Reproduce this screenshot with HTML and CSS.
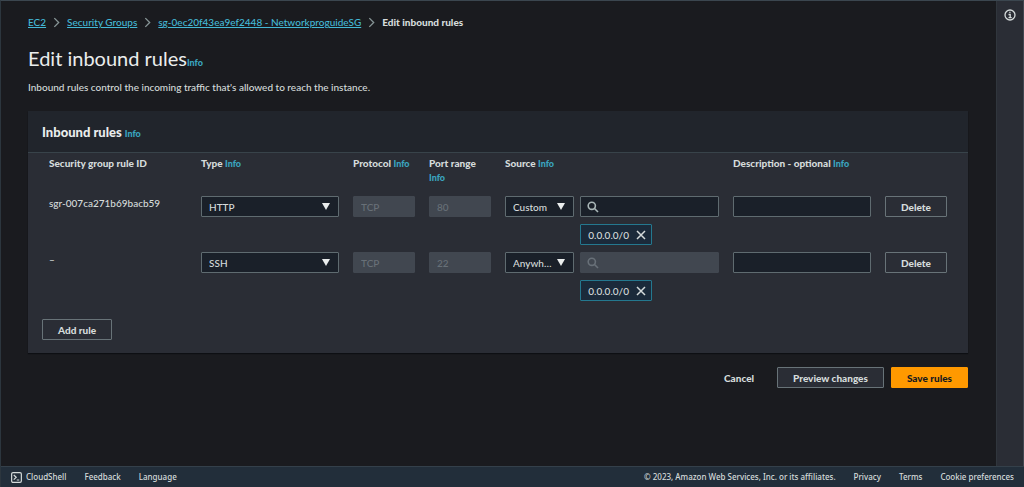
FILE: index.html
```
<!DOCTYPE html>
<html lang="en">
<head>
<meta charset="UTF-8">
<meta name="viewport" content="width=device-width, initial-scale=1">
<title>Edit inbound rules</title>
<link rel="stylesheet" href="styles.css">
</head>
<body>

<div class="layout">
	<main class="content">
		<nav aria-label="Breadcrumbs">
			<ol class="breadcrumbs">
				<li><a href="#">EC2</a><svg class="chevron" viewBox="0 0 8 12"><path d="M1.5 1 6.500 6l-5 5"/></svg></li>
				<li><a href="#">Security Groups</a><svg class="chevron" viewBox="0 0 8 12"><path d="M1.5 1 6.500 6l-5 5"/></svg></li>
				<li><a href="#">sg-0ec20f43ea9ef2448 - NetworkproguideSG</a><svg class="chevron" viewBox="0 0 8 12"><path d="M1.5 1 6.500 6l-5 5"/></svg></li>
				<li class="current" aria-current="page">Edit inbound rules</li>
			</ol>
		</nav>

		<h1 class="title">Edit inbound rules<a class="info" href="#">Info</a></h1>
		<p class="description">Inbound rules control the incoming traffic that's allowed to reach the instance.</p>

		<form>
			<section class="panel">
				<header class="panel-header">
					<h2>Inbound rules <a class="info" href="#">Info</a></h2>
				</header>
				<div class="panel-body">
					<table class="rules">
						<colgroup>
							<col class="col-2">
							<col class="col-2">
							<col class="col-1">
							<col class="col-1">
							<col class="col-3">
							<col class="col-2">
							<col class="col-1">
						</colgroup>
						<thead>
							<tr>
								<th scope="col">Security group rule ID</th>
								<th scope="col">Type <a class="info" href="#">Info</a></th>
								<th scope="col">Protocol <a class="info" href="#">Info</a></th>
								<th scope="col">Port range <a class="info" href="#">Info</a></th>
								<th scope="col">Source <a class="info" href="#">Info</a></th>
								<th scope="col">Description - optional <a class="info" href="#">Info</a></th>
								<td></td>
							</tr>
						</thead>
						<tbody>
							<tr>
								<td>sgr-007ca271b69bacb59</td>
								<td>
									<div class="select">
										<select class="field" aria-label="Type"><option>HTTP</option><option>HTTPS</option><option>SSH</option></select>
										<svg class="arrow" viewBox="0 0 8 7"><path d="M0 0h8L4 7z"/></svg>
									</div>
								</td>
								<td><input class="field" type="text" value="TCP" aria-label="Protocol" disabled></td>
								<td><input class="field" type="text" value="80" aria-label="Port range" disabled></td>
								<td>
									<div class="source">
										<div class="select">
											<select class="field" aria-label="Source type"><option>Custom</option><option>Anywhere-IPv4</option><option>My IP</option></select>
											<svg class="arrow" viewBox="0 0 8 7"><path d="M0 0h8L4 7z"/></svg>
										</div>
										<div class="source-value">
											<div class="search">
												<svg class="search-icon" viewBox="0 0 12 12"><circle cx="4.800" cy="4.800" r="3.600"/><path d="m7.500 7.500 3.500 3.500"/></svg>
												<input class="field" type="text" aria-label="Source">
											</div>
											<span class="token">0.0.0.0/0
												<button type="button" aria-label="Remove 0.0.0.0/0"><svg viewBox="0 0 10 10"><path d="m1 1 8 8M9 1 1 9"/></svg></button>
											</span>
										</div>
									</div>
								</td>
								<td><input class="field" type="text" aria-label="Description"></td>
								<td><button class="btn" type="button">Delete</button></td>
							</tr>
							<tr>
								<td>–</td>
								<td>
									<div class="select">
										<select class="field" aria-label="Type"><option>SSH</option><option>HTTP</option><option>HTTPS</option></select>
										<svg class="arrow" viewBox="0 0 8 7"><path d="M0 0h8L4 7z"/></svg>
									</div>
								</td>
								<td><input class="field" type="text" value="TCP" aria-label="Protocol" disabled></td>
								<td><input class="field" type="text" value="22" aria-label="Port range" disabled></td>
								<td>
									<div class="source">
										<div class="select">
											<select class="field" aria-label="Source type"><option>Anywhere-IPv4</option><option>Custom</option><option>My IP</option></select>
											<svg class="arrow" viewBox="0 0 8 7"><path d="M0 0h8L4 7z"/></svg>
										</div>
										<div class="source-value">
											<div class="search disabled">
												<svg class="search-icon" viewBox="0 0 12 12"><circle cx="4.800" cy="4.800" r="3.600"/><path d="m7.500 7.500 3.500 3.500"/></svg>
												<input class="field" type="text" aria-label="Source" disabled>
											</div>
											<span class="token">0.0.0.0/0
												<button type="button" aria-label="Remove 0.0.0.0/0"><svg viewBox="0 0 10 10"><path d="m1 1 8 8M9 1 1 9"/></svg></button>
											</span>
										</div>
									</div>
								</td>
								<td><input class="field" type="text" aria-label="Description"></td>
								<td><button class="btn" type="button">Delete</button></td>
							</tr>
						</tbody>
					</table>
					<button class="btn add-rule" type="button">Add rule</button>
				</div>
			</section>

			<div class="actions">
				<button class="btn btn-link" type="button">Cancel</button>
				<button class="btn" type="button">Preview changes</button>
				<button class="btn btn-primary" type="submit">Save rules</button>
			</div>
		</form>
	</main>

	<aside class="tools">
		<button type="button" aria-label="Open help panel">
			<svg viewBox="0 0 12 12"><circle cx="6" cy="6" r="5"/><path d="M4.500 5.500H6.200V8.500M4.500 8.700h3.200M5.300 3.400h1.200"/></svg>
		</button>
	</aside>
</div>

<footer class="footer">
	<button class="cloudshell" type="button">
		<svg viewBox="0 0 12 12"><rect x="0.700" y="0.700" width="10.600" height="10.600" rx="1.500"/><path d="m3 3.300 2.700 2.500L3 8.300M6.300 8.700h2.700"/></svg>
		CloudShell
	</button>
	<a href="#">Feedback</a>
	<a href="#">Language</a>
	<span class="copyright">© 2023, Amazon Web Services, Inc. or its affiliates.</span>
	<a href="#">Privacy</a>
	<a href="#">Terms</a>
	<a href="#">Cookie preferences</a>
</footer>

</body>
</html>
```
FILE: styles.css
```
* { box-sizing: border-box; }

body { margin: 0; min-height: 100vh; display: flex; flex-direction: column;
	font-family: Lato, "Noto Sans", sans-serif; font-size: 10px; line-height: 14px; font-weight: 500;
	color: #d5dbdb; background: #1a1b1f;
	border-top: 1px solid #3b464f; border-left: 1px solid #2c363e; }

button, input, select { font: inherit; color: inherit; margin: 0; }
button { cursor: pointer; }
svg { display: block; fill: none; stroke: currentColor; }

a { color: #44b9d6; }
.info { font-size: 9px; line-height: 1; font-weight: 900; text-decoration: none; color: #3aa5c0; }

.layout { flex: 1; display: flex; }
.content { flex: 1; min-width: 0; padding: 14px 28px 14px 27px; }

/* Breadcrumbs and page title */
.breadcrumbs { display: flex; flex-wrap: wrap; gap: 7px; margin: 0; padding: 0; list-style: none; }
.breadcrumbs li { display: flex; align-items: center; gap: 7px; }
.breadcrumbs .current { font-weight: 900; }
.chevron { width: 7px; height: 11px; color: #879596; stroke-width: 1.500; }

.title { margin: 15px 0 0; font-size: 20px; line-height: 28px; font-weight: normal; color: #eaeded; }
.description { margin: 8px 0 17px; }

/* Rules panel */
.panel { background: #2a2d35; box-shadow: 0 1px 1px #0d0f13; }
.panel-header { padding: 11px 14px 10px; background: #21252c; border-bottom: 1px solid #38434a; }
.panel-header h2 { margin: 0; font-size: 13px; line-height: 20px; font-weight: 900; color: #eaeded; }
.panel-body { padding: 0 14px 13px; }

.rules { width: 100%; table-layout: fixed; border-collapse: collapse; }
.rules th, .rules td { padding: 0 7px 7px; text-align: left; vertical-align: top; }
.rules thead th { padding-top: 3px; padding-bottom: 12px; font-weight: 900; }
.col-1 { width: 8.333%; }
.col-2 { width: 16.667%; }
.col-3 { width: 25%; }

.field { display: block; width: 100%; height: 21px; padding: 0 7px;
	background: #1a2029; border: 1px solid #5f6b70; border-radius: 1px; outline: none; }
.field:focus { border-color: #44b9d6; }
.field:disabled { background: #414750; border-color: #414750; color: #687078; }

.select { position: relative; }
.select .field { appearance: none; padding-right: 20px; text-overflow: ellipsis; }
.arrow { position: absolute; right: 9px; top: 7px; width: 8px; height: 7px; fill: #eaeded; stroke: none; pointer-events: none; }

.source { display: flex; gap: 6px; }
.source .select { flex: 1; min-width: 0; }
.source-value { flex: 2; min-width: 0; }

.search { position: relative; }
.search .field { padding-left: 23px; }
.search-icon { position: absolute; left: 7px; top: 5px; width: 12px; height: 12px; color: #aab7b8; stroke-width: 1.600; }
.search.disabled .search-icon { color: #687078; }

.token { display: inline-flex; align-items: center; gap: 7px; height: 21px; margin-top: 7px; padding: 0 5px 0 7px; vertical-align: top;
	background: #1b2a3a; border: 1px solid #24788f; border-radius: 1px; }
.token button { padding: 0; border: 0; background: none; }
.token svg { width: 10px; height: 10px; stroke-width: 1.500; }

/* Buttons */
.btn { height: 21px; padding: 0 15px; font-weight: 900; white-space: nowrap;
	background: #2a2d35; border: 1px solid #687378; border-radius: 1px; }
.btn:hover { color: #fff; }
.btn-link { background: transparent; border-color: transparent; }
.btn-primary, .btn-primary:hover { background: #ff9900; border-color: #ff9900; color: #16191f; }
.add-rule { display: block; margin-top: 11px; }
.actions { display: flex; justify-content: flex-end; gap: 7px; margin-top: 14px; }

.tools { width: 28px; padding-top: 8px; background: #2a2d35; border-left: 1px solid #30363d; border-right: 1px solid #414750; }
.tools button { display: block; margin: 0 auto; padding: 0; border: 0; background: none; }
.tools svg { width: 12px; height: 12px; stroke-width: 1.300; }

/* Footer */
.footer { display: flex; flex-wrap: wrap; align-items: center; gap: 18px; min-height: 21px; padding: 0 10px;
	font-family: "Noto Sans", sans-serif; font-size: 8px; background: #222e3a; border-top: 1px solid #34404a; }
.footer a { color: inherit; text-decoration: none; }
.cloudshell { display: flex; align-items: center; gap: 4px; padding: 0; border: 0; background: none; }
.cloudshell svg { width: 11px; height: 11px; stroke-width: 1.300; }
.copyright { margin-left: auto; }
```
